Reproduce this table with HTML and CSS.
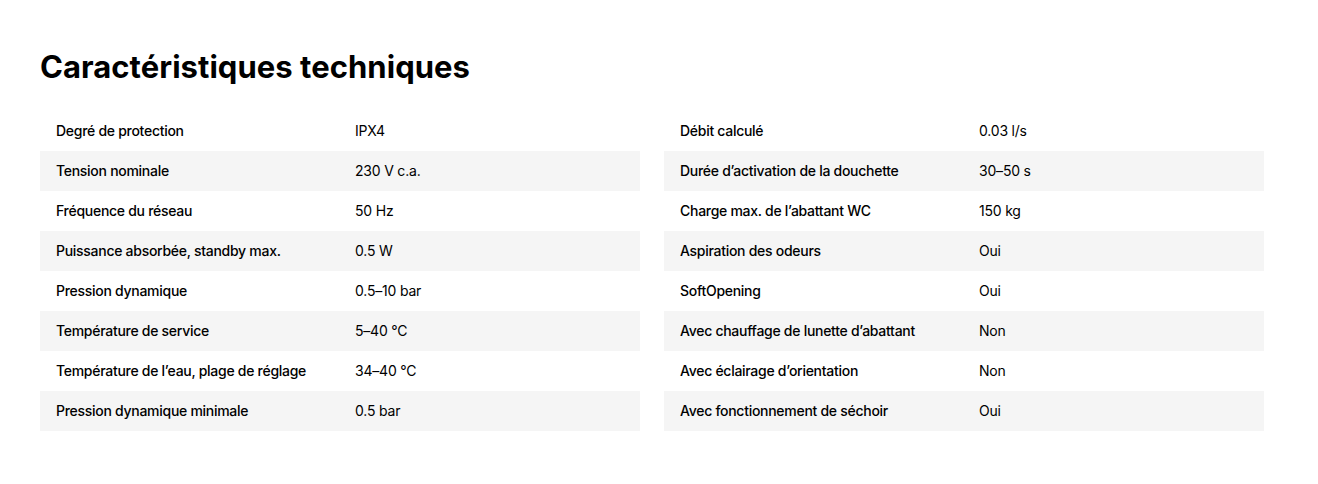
FILE: index.html
```html
<!DOCTYPE html>
<html lang="fr">
<head>
<meta charset="utf-8">
<title>Caractéristiques techniques</title>
<link rel="stylesheet" href="styles.css">
</head>
<body>
<section class="specs">
  <h2 class="specs-title">Caractéristiques techniques</h2>
  <div class="specs-grid">
    <dl class="spec-table">
      <div class="spec-row"><dt>Degré de protection</dt><dd>IPX4</dd></div>
      <div class="spec-row"><dt>Tension nominale</dt><dd>230 V c.a.</dd></div>
      <div class="spec-row"><dt>Fréquence du réseau</dt><dd>50 Hz</dd></div>
      <div class="spec-row"><dt>Puissance absorbée, standby max.</dt><dd>0.5 W</dd></div>
      <div class="spec-row"><dt>Pression dynamique</dt><dd>0.5–10 bar</dd></div>
      <div class="spec-row"><dt>Température de service</dt><dd>5–40 °C</dd></div>
      <div class="spec-row"><dt>Température de l’eau, plage de réglage</dt><dd>34–40 °C</dd></div>
      <div class="spec-row"><dt>Pression dynamique minimale</dt><dd>0.5 bar</dd></div>
    </dl>
    <dl class="spec-table">
      <div class="spec-row"><dt>Débit calculé</dt><dd>0.03 l/s</dd></div>
      <div class="spec-row"><dt>Durée d’activation de la douchette</dt><dd>30–50 s</dd></div>
      <div class="spec-row"><dt>Charge max. de l’abattant WC</dt><dd>150 kg</dd></div>
      <div class="spec-row"><dt>Aspiration des odeurs</dt><dd>Oui</dd></div>
      <div class="spec-row"><dt>SoftOpening</dt><dd>Oui</dd></div>
      <div class="spec-row"><dt>Avec chauffage de lunette d’abattant</dt><dd>Non</dd></div>
      <div class="spec-row"><dt>Avec éclairage d’orientation</dt><dd>Non</dd></div>
      <div class="spec-row"><dt>Avec fonctionnement de séchoir</dt><dd>Oui</dd></div>
    </dl>
  </div>
</section>
</body>
</html>
```
FILE: styles.css
```css
* { box-sizing: border-box; }
html, body { margin: 0; padding: 0; background: #fff; }
body {
  font-family: Inter, "Liberation Sans", Arial, sans-serif;
  color: #000;
}
.specs {
  padding: 47px 54px 0 40px;
}
.specs-title {
  margin: 0 0 24px 0;
  font-size: 31px;
  line-height: 40px;
  font-weight: 700;
  letter-spacing: 0.05px;
}
.specs-grid {
  display: grid;
  grid-template-columns: 600px 600px;
  column-gap: 24px;
}
.spec-table {
  margin: 0;
  display: flex;
  flex-direction: column;
}
.spec-row {
  display: grid;
  grid-template-columns: 315px 1fr;
  height: 40px;
  align-items: center;
  font-size: 14px;
  line-height: 20px;
}
.spec-row:nth-child(even) { background: #f5f5f5; }
.spec-row dt {
  padding-left: 16px;
  font-weight: 500;
  letter-spacing: -0.28px;
}
.spec-row dd {
  margin: 0;
  font-weight: 400;
  letter-spacing: -0.2px;
}
```
